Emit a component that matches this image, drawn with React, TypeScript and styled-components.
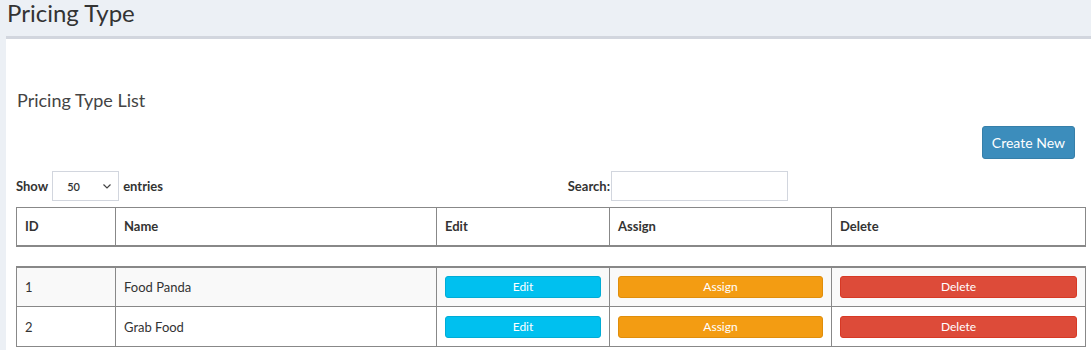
import React from "react";
import styled, { createGlobalStyle } from "styled-components";

const GlobalStyle = createGlobalStyle`
  html, body {
    margin: 0;
    padding: 0;
    background: #ecf0f5;
    overflow: hidden;
  }
  body {
    font-family: "Source Sans Pro", Lato, "Liberation Sans", sans-serif;
    color: #333;
  }
  * { box-sizing: border-box; }
`;

const Page = styled.div`
  width: 1091px;
  height: 350px;
  overflow: hidden;
`;

const PageTitle = styled.h1`
  margin: -3px 0 0 7px;
  font-size: 24px;
  font-weight: 400;
  line-height: 32px;
  height: 33px;
  color: #333;
`;

const Box = styled.section`
  margin: 6px -20px 0 6px;
  background: #fff;
  border-top: 3px solid #d2d6de;
  padding: 0 30px 20px 10px;
`;

const BoxTitle = styled.h3`
  margin: 0;
  padding: 50px 0 0 1px;
  font-size: 18px;
  font-weight: 400;
  line-height: 22px;
  color: #444;
`;

const ActionBar = styled.div`
  display: flex;
  justify-content: flex-end;
  padding: 15px 6px 0 0;
`;

const CreateButton = styled.button`
  height: 33px;
  padding: 0 9px;
  background: #3c8dbc;
  border: 1px solid #367fa9;
  border-radius: 3px;
  color: #fff;
  font-family: inherit;
  font-size: 14px;
`;

const Toolbar = styled.div`
  display: flex;
  justify-content: space-between;
  align-items: center;
  margin-top: 12px;
  padding-right: 293px;
  height: 30px;
  font-size: 13px;
  font-weight: 700;
`;

const Label = styled.label<{ $gap?: number }>`
  display: flex;
  align-items: center;
  gap: ${(p) => p.$gap ?? 4}px;
`;

const Select = styled.div`
  display: flex;
  align-items: center;
  justify-content: space-between;
  width: 67px;
  height: 30px;
  padding: 0 6px 0 14px;
  border: 1px solid #d2d6de;
  background: #fff;
  font-size: 11px;
  font-weight: 600;
`;

const SearchInput = styled.input`
  width: 177px;
  height: 30px;
  border: 1px solid #d2d6de;
  margin-left: 1px;
  outline: none;
`;

const Table = styled.table<{ $body?: boolean }>`
  width: 1069px;
  table-layout: fixed;
  border-collapse: collapse;
  font-size: 13px;
  margin-top: ${(p) => (p.$body ? "19px" : "6px")};
  border-top: ${(p) => (p.$body ? "2px" : "1px")} solid #888;
`;

const Th = styled.th`
  text-align: left;
  font-weight: 700;
  height: 38px;
  padding: 0 8px;
  border: 1px solid #888;
  border-bottom: 2px solid #888;
`;

const Tr = styled.tr<{ $odd?: boolean }>`
  background: ${(p) => (p.$odd ? "#f9f9f9" : "#fff")};
`;

const Td = styled.td`
  height: 40px;
  padding: 0 8px;
  border: 1px solid #888;
  vertical-align: middle;
`;

const ActionButton = styled.button<{ $bg: string; $border: string }>`
  display: block;
  width: 100%;
  height: 22px;
  padding: 0;
  background: ${(p) => p.$bg};
  border: 1px solid ${(p) => p.$border};
  border-radius: 3px;
  color: #fff;
  font-family: inherit;
  font-size: 12px;
`;

const widths = [99, 321, 173, 222, 254];

const Cols = () => (
  <colgroup>
    {widths.map((w, i) => (
      <col key={i} style={{ width: w }} />
    ))}
  </colgroup>
);

const rows = [
  { id: 1, name: "Food Panda" },
  { id: 2, name: "Grab Food" },
];

export default function App() {
  return (
    <Page>
      <GlobalStyle />
      <PageTitle>Pricing Type</PageTitle>
      <Box>
        <BoxTitle>Pricing Type List</BoxTitle>
        <ActionBar>
          <CreateButton>Create New</CreateButton>
        </ActionBar>
        <Toolbar>
          <Label>
            Show
            <Select>
              <span>50</span>
              <svg width="10" height="10" viewBox="0 0 10 10">
                <path d="M1.5 3.5 L5 7 L8.5 3.5" fill="none" stroke="#444" strokeWidth="1.2" />
              </svg>
            </Select>
            entries
          </Label>
          <Label $gap={0}>
            Search:
            <SearchInput type="text" />
          </Label>
        </Toolbar>
        <Table>
          <Cols />
          <thead>
            <tr>
              <Th>ID</Th>
              <Th>Name</Th>
              <Th>Edit</Th>
              <Th>Assign</Th>
              <Th>Delete</Th>
            </tr>
          </thead>
        </Table>
        <Table $body>
          <Cols />
          <tbody>
            {rows.map((r, i) => (
              <Tr key={r.id} $odd={i % 2 === 0}>
                <Td>{r.id}</Td>
                <Td>{r.name}</Td>
                <Td>
                  <ActionButton $bg="#00c0ef" $border="#00acd6">Edit</ActionButton>
                </Td>
                <Td>
                  <ActionButton $bg="#f39c12" $border="#e08e0b">Assign</ActionButton>
                </Td>
                <Td>
                  <ActionButton $bg="#dd4b39" $border="#d73925">Delete</ActionButton>
                </Td>
              </Tr>
            ))}
          </tbody>
        </Table>
      </Box>
    </Page>
  );
}
